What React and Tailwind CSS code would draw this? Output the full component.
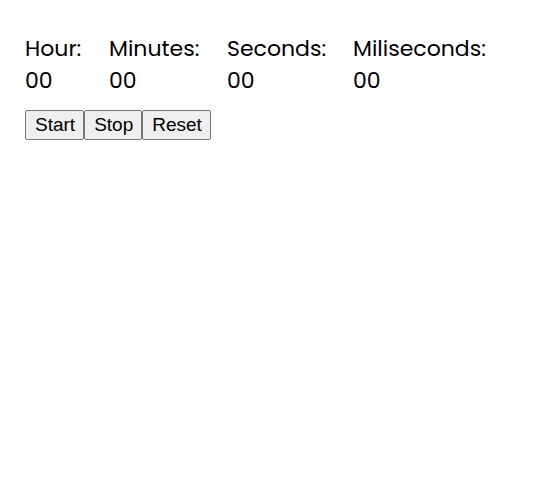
import React from 'react';

const units = [
  { label: 'Hour:', w: 'w-[84px]' },
  { label: 'Minutes:', w: 'w-[118px]' },
  { label: 'Seconds:', w: 'w-[126px]' },
  { label: 'Miliseconds:', w: 'w-[150px]' },
];

const App = () => {
  return (
    <div className="min-h-screen bg-white px-[25px] pt-[33px] text-black">
      <div className="flex font-['Poppins','Open_Sans',sans-serif] text-[22px] leading-[32px]">
        {units.map((u) => (
          <div key={u.label} className={u.w}>
            <div>{u.label}</div>
            <div>00</div>
          </div>
        ))}
      </div>
      <div className="mt-[13px] flex font-['Liberation_Sans',Arial,sans-serif] text-[19px] leading-[22px]">
        <button className="h-[30px] border border-[#767676] bg-[#efefef] pl-[9px] pr-[8px] rounded-[2px]">Start</button>
        <button className="h-[30px] border border-[#767676] bg-[#efefef] pl-[9px] pr-[8px] rounded-[2px]">Stop</button>
        <button className="h-[30px] border border-[#767676] bg-[#efefef] pl-[9px] pr-[8px] rounded-[2px]">Reset</button>
      </div>
    </div>
  );
};

export default App;
